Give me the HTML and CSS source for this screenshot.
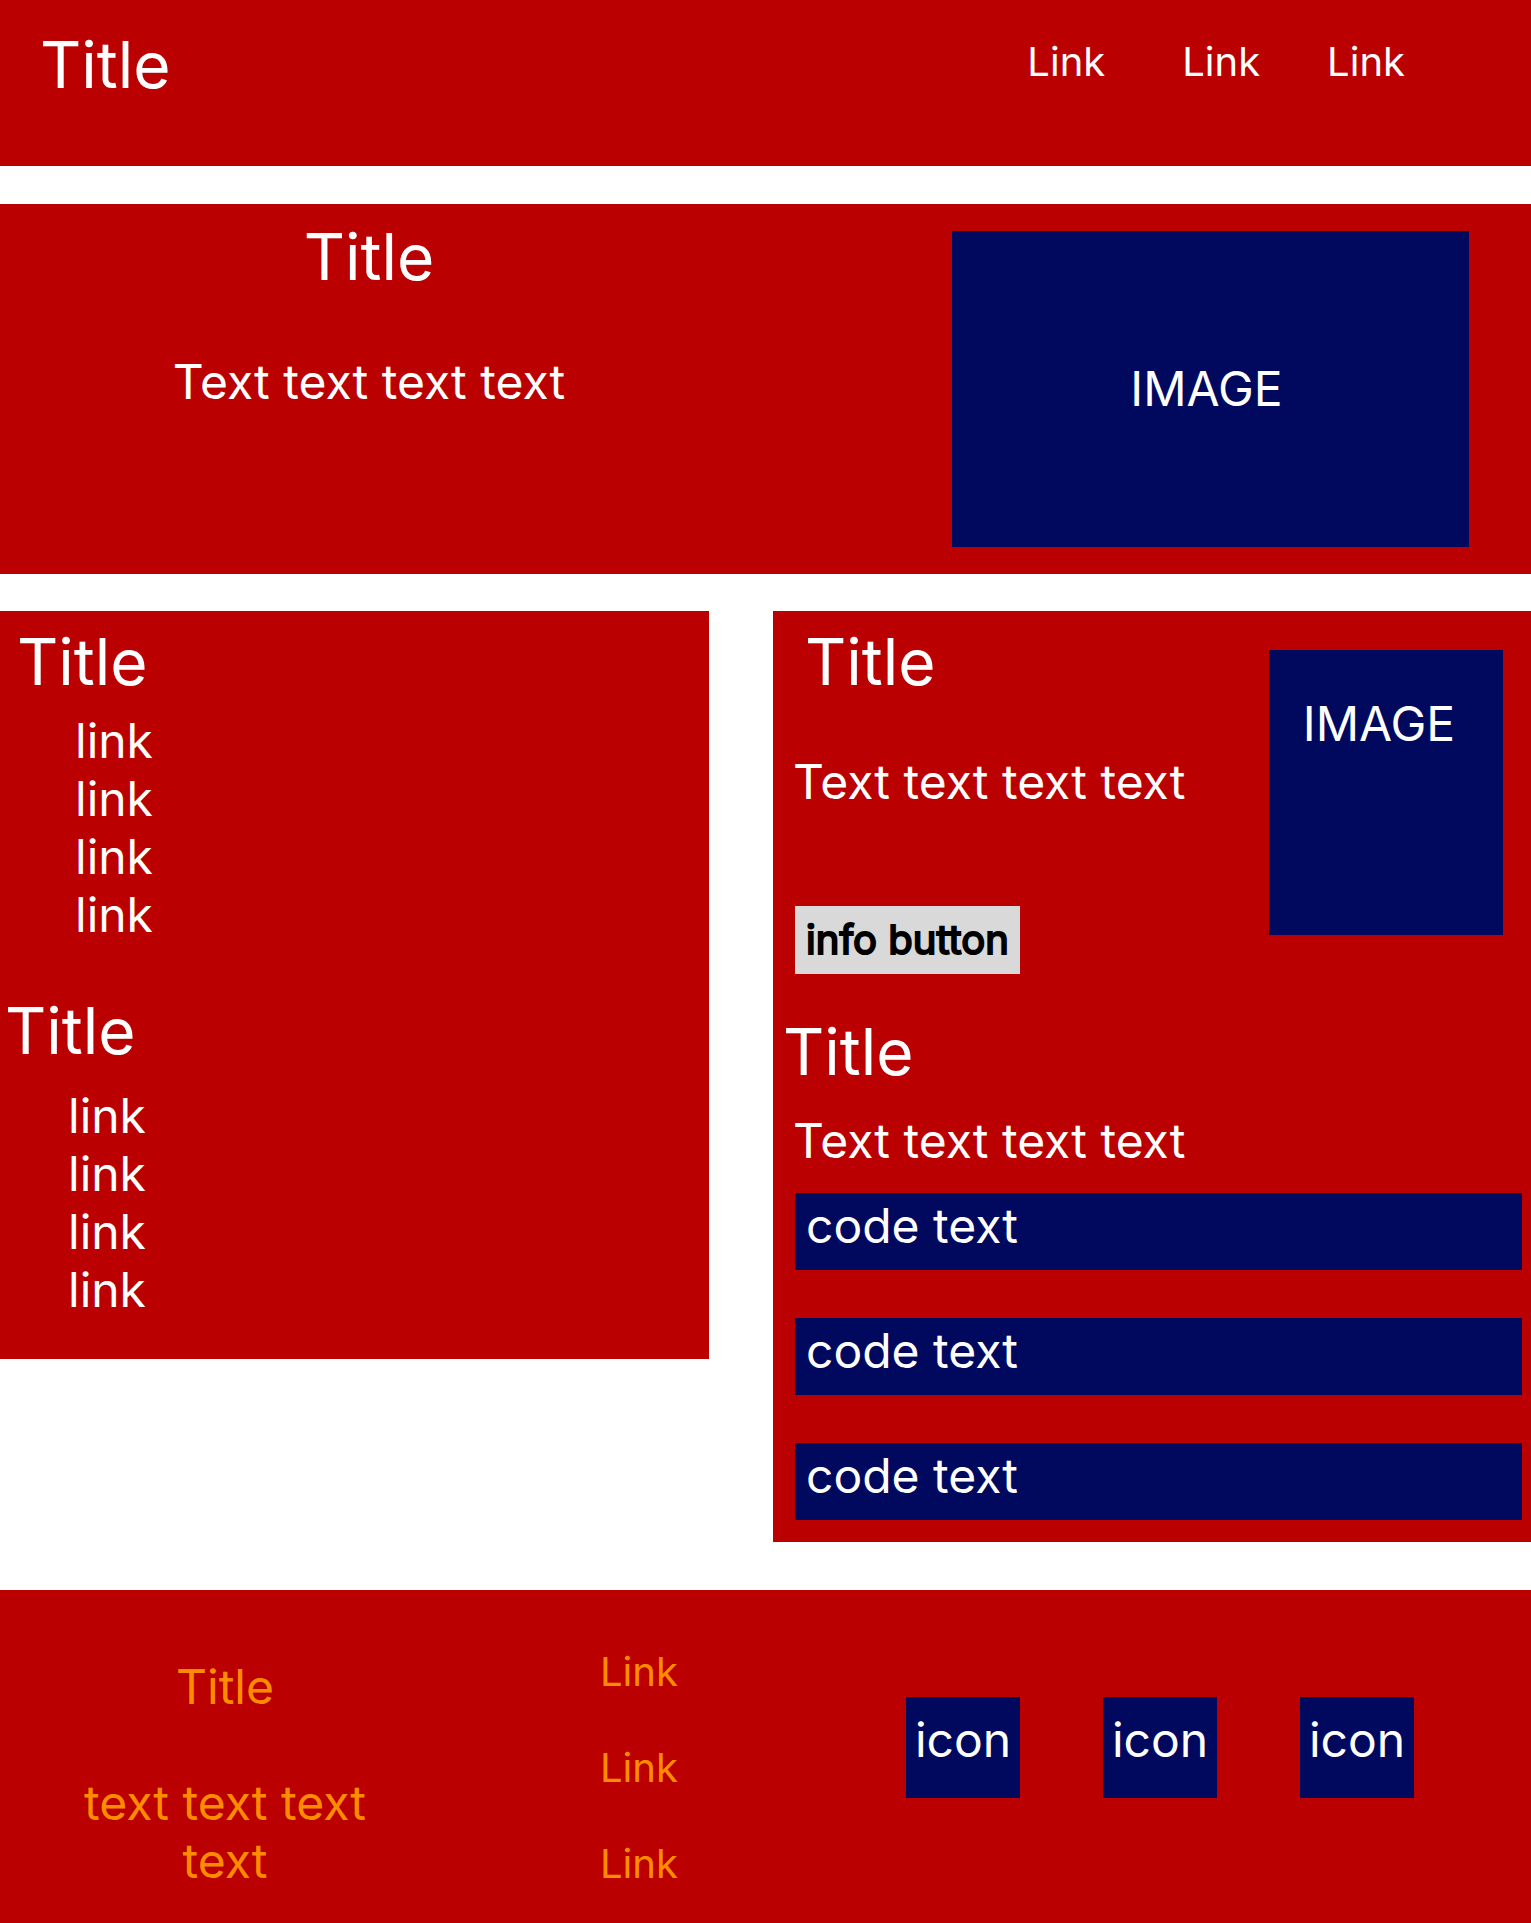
FILE: index.html
```html
<!DOCTYPE html>
<html lang="en">
<head>
<meta charset="utf-8">
<meta name="viewport" content="width=device-width, initial-scale=1">
<title>Title</title>
<link rel="stylesheet" href="styles.css">
</head>
<body>
<header class="site-header">
  <h1 class="title">Title</h1>
  <nav class="site-nav" aria-label="Main">
    <a class="nav-link" href="#">Link</a>
    <a class="nav-link" href="#">Link</a>
    <a class="nav-link" href="#">Link</a>
  </nav>
</header>

<section class="hero">
  <div class="hero-copy">
    <h2 class="title">Title</h2>
    <p class="text">Text text text text</p>
  </div>
  <div class="image hero-image">IMAGE</div>
</section>

<main class="columns">
  <aside class="panel sidebar">
    <h2 class="title sidebar-title">Title</h2>
    <ul class="link-list">
      <li><a href="#">link</a></li>
      <li><a href="#">link</a></li>
      <li><a href="#">link</a></li>
      <li><a href="#">link</a></li>
    </ul>
    <h2 class="title sidebar-title-low">Title</h2>
    <ul class="link-list link-list-low">
      <li><a href="#">link</a></li>
      <li><a href="#">link</a></li>
      <li><a href="#">link</a></li>
      <li><a href="#">link</a></li>
    </ul>
  </aside>

  <section class="panel content">
    <div class="feature">
      <div class="feature-copy">
        <h2 class="title feature-title">Title</h2>
        <p class="text">Text text text text</p>
        <button class="info-button" type="button">info button</button>
      </div>
      <div class="image feature-image">IMAGE</div>
    </div>
    <h2 class="title code-title">Title</h2>
    <p class="text code-intro">Text text text text</p>
    <div class="code-list">
      <code class="code">code text</code>
      <code class="code">code text</code>
      <code class="code">code text</code>
    </div>
  </section>
</main>

<footer class="site-footer">
  <div class="footer-copy">
    <h2 class="footer-title">Title</h2>
    <p class="text">text text text text</p>
  </div>
  <nav class="footer-nav" aria-label="Footer">
    <a class="nav-link" href="#">Link</a>
    <a class="nav-link" href="#">Link</a>
    <a class="nav-link" href="#">Link</a>
  </nav>
  <div class="icons">
    <a class="icon" href="#">icon</a>
    <a class="icon" href="#">icon</a>
    <a class="icon" href="#">icon</a>
  </div>
</footer>
</body>
</html>
```
FILE: styles.css
```css
:root {
  --red: #ba0000;
  --navy: #00095e;
  --orange: #ff8c00;
  --grey: #d9d9d9;
}

* {
  box-sizing: border-box;
}

body {
  margin: 0;
  background: #fff;
  color: #fff;
  font-family: Inter, sans-serif;
  font-size: 48px;
  line-height: 58px;
}

h1,
h2,
p,
ul {
  margin: 0;
  padding: 0;
  font-weight: 400;
}

ul {
  list-style: none;
}

a {
  color: inherit;
  text-decoration: none;
}

.title {
  font-size: 64px;
  line-height: 77px;
}

.nav-link {
  font-size: 40px;
  line-height: 48px;
}

.image {
  background: var(--navy);
  text-align: center;
}

/* Header */
.site-header {
  display: flex;
  justify-content: space-between;
  align-items: flex-start;
  min-height: 166px;
  padding: 26px 126px 0 40px;
  background: var(--red);
}

.site-nav {
  display: flex;
  gap: 67px;
  padding-top: 12px;
}

.site-nav .nav-link:first-child {
  margin-right: 10px;
}

/* Hero */
.hero {
  display: grid;
  grid-template-columns: 738fr 517fr;
  column-gap: 214px;
  margin-top: 38px;
  padding: 14px 62px 27px 0;
  background: var(--red);
}

.hero-copy {
  text-align: center;
}

.hero-copy .text {
  margin-top: 58px;
}

.hero-image {
  display: flex;
  align-items: center;
  justify-content: center;
  min-height: 316px;
  margin-top: 13px;
  padding-right: 8px;
}

/* Two columns */
.columns {
  display: grid;
  grid-template-columns: 709fr 758fr;
  column-gap: 64px;
  align-items: start;
  margin-top: 37px;
}

.panel {
  padding-top: 12px;
  background: var(--red);
}

.sidebar {
  padding-bottom: 40px;
}

.sidebar-title {
  padding-left: 17px;
}

.sidebar-title-low {
  margin-top: 48px;
  padding-left: 5px;
}

.link-list {
  margin-top: 12px;
  padding-left: 75px;
}

.link-list-low {
  margin-top: 18px;
  padding-left: 68px;
}

.content {
  padding-bottom: 22px;
}

.feature {
  display: flex;
  justify-content: space-between;
  align-items: flex-start;
  padding: 0 28px 0 20px;
}

.feature-title {
  padding-left: 12px;
}

.feature-copy .text {
  margin-top: 53px;
}

.info-button {
  display: block;
  width: 225px;
  height: 68px;
  margin: 95px 0 0 2px;
  padding: 0;
  border: 0;
  background: var(--grey);
  color: #000;
  font: 400 40px/48px Inter, sans-serif;
  font-feature-settings: "calt" 0;
  font-variant-ligatures: none;
  -webkit-text-stroke: 2px #000;
}

.feature-image {
  width: 234px;
  height: 285px;
  margin-top: 27px;
  padding: 45px 14px 0 0;
}

.code-title {
  margin-top: 39px;
  padding-left: 10px;
}

.code-intro {
  margin-top: 22px;
  padding-left: 20px;
}

.code-list {
  display: grid;
  gap: 48px;
  margin: 23px 9px 0 22px;
}

.code {
  min-height: 77px;
  padding: 4px 11px 0;
  background: var(--navy);
  font-family: inherit;
}

/* Footer */
.site-footer {
  display: grid;
  grid-template-columns: 450fr 456fr 625fr;
  align-items: start;
  margin-top: 48px;
  padding: 58px 0 33px;
  background: var(--red);
}

.footer-copy {
  padding: 10px 64px 0;
  color: var(--orange);
  text-align: center;
}

.footer-title {
  font-size: 48px;
  line-height: 58px;
}

.footer-copy .text {
  margin-top: 58px;
}

.footer-nav {
  display: grid;
  gap: 48px;
  justify-items: start;
  padding-left: 150px;
  color: var(--orange);
}

.icons {
  display: flex;
  gap: 83px;
  padding-top: 49px;
}

.icon {
  width: 114px;
  height: 101px;
  padding-top: 14px;
  background: var(--navy);
  text-align: center;
}
```
